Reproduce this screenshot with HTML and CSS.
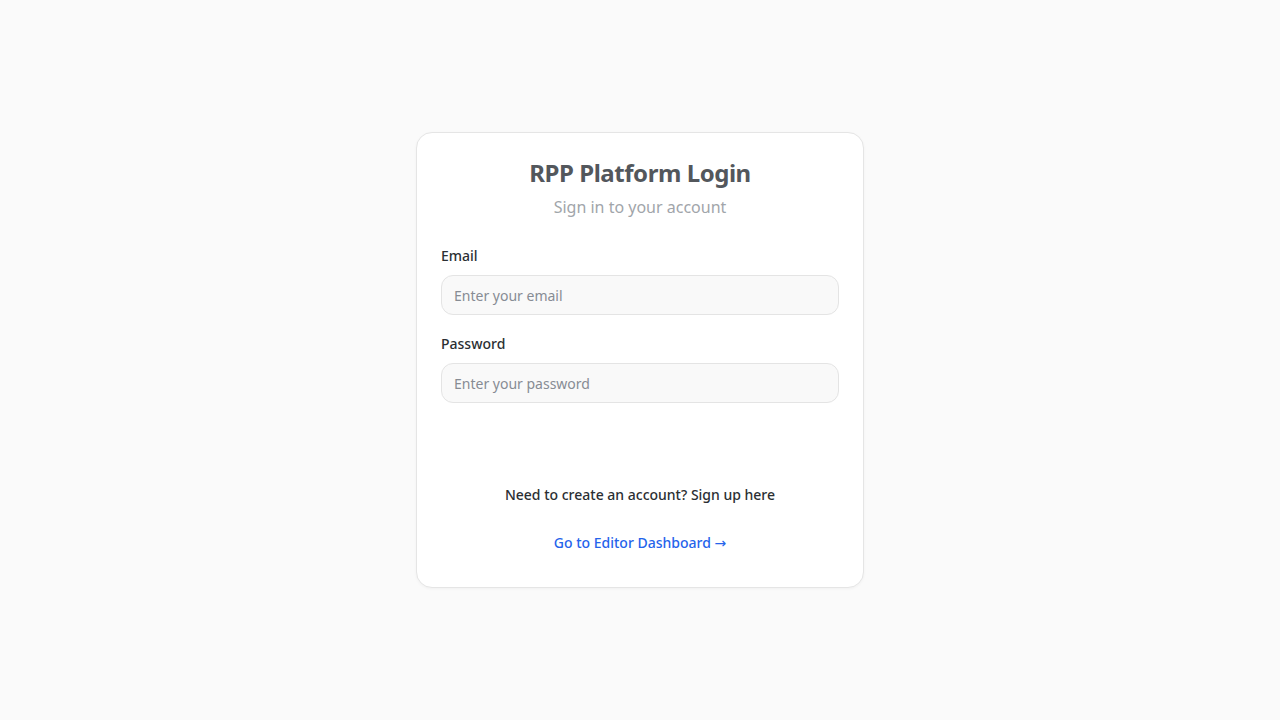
FILE: index.html
```html
<!DOCTYPE html>
<html lang="en">
<head>
<meta charset="utf-8">
<title>RPP Platform Login</title>
<link rel="stylesheet" href="styles.css">
</head>
<body>
<main class="page">
  <section class="card">
    <header class="card-header">
      <h1 class="title">RPP Platform Login</h1>
      <p class="subtitle">Sign in to your account</p>
    </header>
    <form class="form">
      <div class="field">
        <label class="label" for="email">Email</label>
        <input class="input" id="email" type="email" placeholder="Enter your email">
      </div>
      <div class="field">
        <label class="label" for="password">Password</label>
        <input class="input" id="password" type="password" placeholder="Enter your password">
      </div>
      <div class="button-slot"></div>
    </form>
    <p class="signup">Need to create an account? Sign up here</p>
    <a class="dash-link" href="#">Go to Editor Dashboard <span class="arrow">→</span></a>
  </section>
</main>
</body>
</html>
```
FILE: styles.css
```css
* { box-sizing: border-box; }
html, body { margin: 0; padding: 0; }
body {
  background: #fafafa;
  font-family: "Noto Sans", "Open Sans", sans-serif;
  color: #333;
}
.page {
  min-height: 720px;
  display: flex;
  align-items: center;
  justify-content: center;
}
.card {
  width: 448px;
  background: #fff;
  border: 1px solid #e5e5e5;
  border-radius: 16px;
  box-shadow: 0 1px 3px rgba(0,0,0,0.04);
  padding: 24px 24px 34px;
  display: flex;
  flex-direction: column;
}
.card-header { text-align: center; margin-bottom: 27px; }
.title {
  margin: 0;
  font-size: 24px;
  line-height: 32px;
  font-weight: 700;
  letter-spacing: -0.45px;
  color: #53575c;
}
.subtitle {
  margin: 6px 0 0;
  font-size: 16px;
  line-height: 24px;
  color: #a1a5aa;
}
.form { display: flex; flex-direction: column; gap: 19px; }
.field { display: flex; flex-direction: column; gap: 9px; }
.label {
  font-size: 14px;
  line-height: 20px;
  font-weight: 500;
  color: #2b2f33;
}
.input {
  height: 40px;
  border: 1px solid #e4e4e4;
  border-radius: 12px;
  background: #f9f9f9;
  padding: 0 12px;
  font-family: inherit;
  font-size: 14px;
  color: #333;
  outline: none;
}
.input::placeholder { color: #878c94; }
.button-slot { height: 41px; margin-top: 4px; }
.signup {
  margin: 18px 0 0;
  text-align: center;
  font-size: 14px;
  line-height: 20px;
  font-weight: 500;
  color: #2b2f33;
}
.dash-link {
  margin-top: 28px;
  align-self: center;
  font-size: 14px;
  line-height: 20px;
  font-weight: 500;
  color: #2563eb;
  text-decoration: none;
}
.arrow { font-family: "DejaVu Sans", sans-serif; font-weight: 400; }
```
